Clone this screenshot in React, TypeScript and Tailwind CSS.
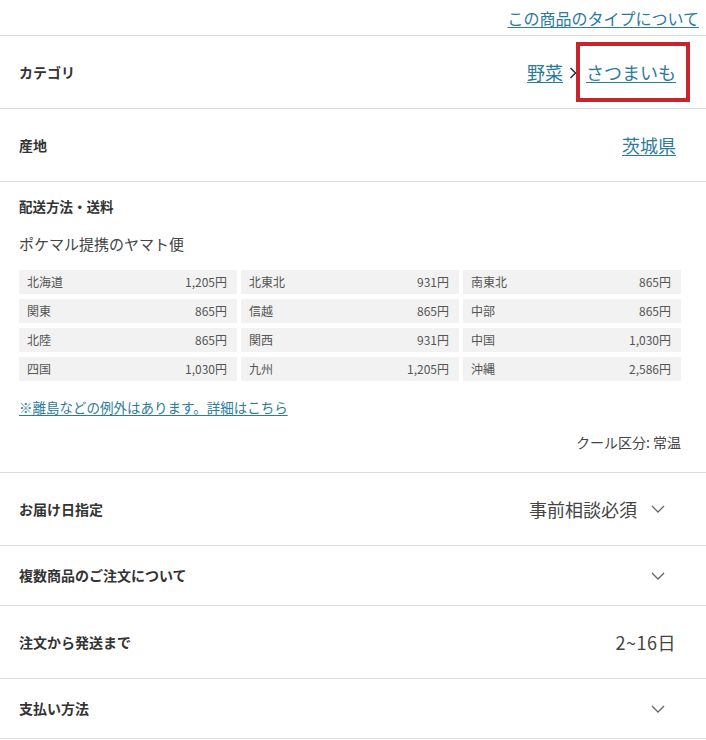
import React from 'react';

const font = { fontFamily: '"Noto Sans CJK JP", "Noto Sans", sans-serif' };

const shipping = [
  ['北海道', '1,205円'], ['北東北', '931円'], ['南東北', '865円'],
  ['関東', '865円'], ['信越', '865円'], ['中部', '865円'],
  ['北陸', '865円'], ['関西', '931円'], ['中国', '1,030円'],
  ['四国', '1,030円'], ['九州', '1,205円'], ['沖縄', '2,586円'],
];

function Chevron() {
  return (
    <svg width="14" height="8" viewBox="0 0 14 8" fill="none" className="mr-[11px]">
      <path d="M1 1l6 6 6-6" stroke="#666" strokeWidth="1.3" />
    </svg>
  );
}

function Row({ label, h, children }: { label: string; h: string; children?: React.ReactNode }) {
  return (
    <div className={`flex items-center justify-between border-b border-[#dcdcdc] pl-[19px] pr-[30px] ${h}`}>
      <span className="text-[14px] font-semibold text-[#333]">{label}</span>
      <div className="flex items-center">{children}</div>
    </div>
  );
}

export default function App() {
  return (
    <div className="w-[706px] bg-white" style={font}>
      <div className="flex h-[36px] items-center justify-end border-b border-[#dcdcdc] pr-[7px]">
        <a href="#" className="text-[16px] text-[#2b7b9b] underline underline-offset-2">この商品のタイプについて</a>
      </div>

      <Row label="カテゴリ" h="h-[73px]">
        <a href="#" className="text-[18px] text-[#2b7b9b] underline underline-offset-2">野菜</a>
        <svg width="8" height="12" viewBox="0 0 8 12" fill="none" className="ml-[6px] mr-[9px] mt-[1px]">
          <path d="M1.5 1l5 5-5 5" stroke="#333" strokeWidth="1.6" />
        </svg>
        <span className="relative">
          <a href="#" className="text-[18px] text-[#2b7b9b] underline underline-offset-2">さつまいも</a>
          <span className="absolute -left-[10px] -right-[14px] -top-[17px] -bottom-[16px] border-4 border-[#c9252d]" />
        </span>
      </Row>

      <Row label="産地" h="h-[73px]">
        <a href="#" className="text-[18px] text-[#2b7b9b] underline underline-offset-2">茨城県</a>
      </Row>

      <div className="border-b border-[#dcdcdc] pl-[19px] pr-[25px] pt-[14px] pb-[20px]">
        <div className="text-[13.5px] font-semibold text-[#333] leading-[20px]">配送方法・送料</div>
        <div className="mt-[18px] text-[15px] text-[#444] leading-[20px]">ポケマル提携のヤマト便</div>
        <div className="mt-[16px] grid grid-cols-3 gap-x-[4px] gap-y-[5px]">
          {shipping.map(([area, price]) => (
            <div key={area} className="flex h-[24px] items-center justify-between bg-[#f2f2f2] pl-[8px] pr-[10px] text-[12px] text-[#555]">
              <span>{area}</span>
              <span>{price}</span>
            </div>
          ))}
        </div>
        <div className="mt-[15px] leading-[20px]">
          <a href="#" className="text-[13.5px] text-[#2b7b9b] underline underline-offset-2">※離島などの例外はあります。詳細はこちら</a>
        </div>
        <div className="mt-[15px] text-right text-[14px] text-[#444] leading-[20px]">クール区分: 常温</div>
      </div>

      <Row label="お届け日指定" h="h-[73px]">
        <span className="mr-[14px] text-[18px] text-[#444]">事前相談必須</span>
        <Chevron />
      </Row>

      <Row label="複数商品のご注文について" h="h-[60px]">
        <Chevron />
      </Row>

      <Row label="注文から発送まで" h="h-[73px]">
        <span className="text-[18px] tracking-[0.5px] text-[#444]">2~16日</span>
      </Row>

      <Row label="支払い方法" h="h-[60px]">
        <Chevron />
      </Row>
    </div>
  );
}
